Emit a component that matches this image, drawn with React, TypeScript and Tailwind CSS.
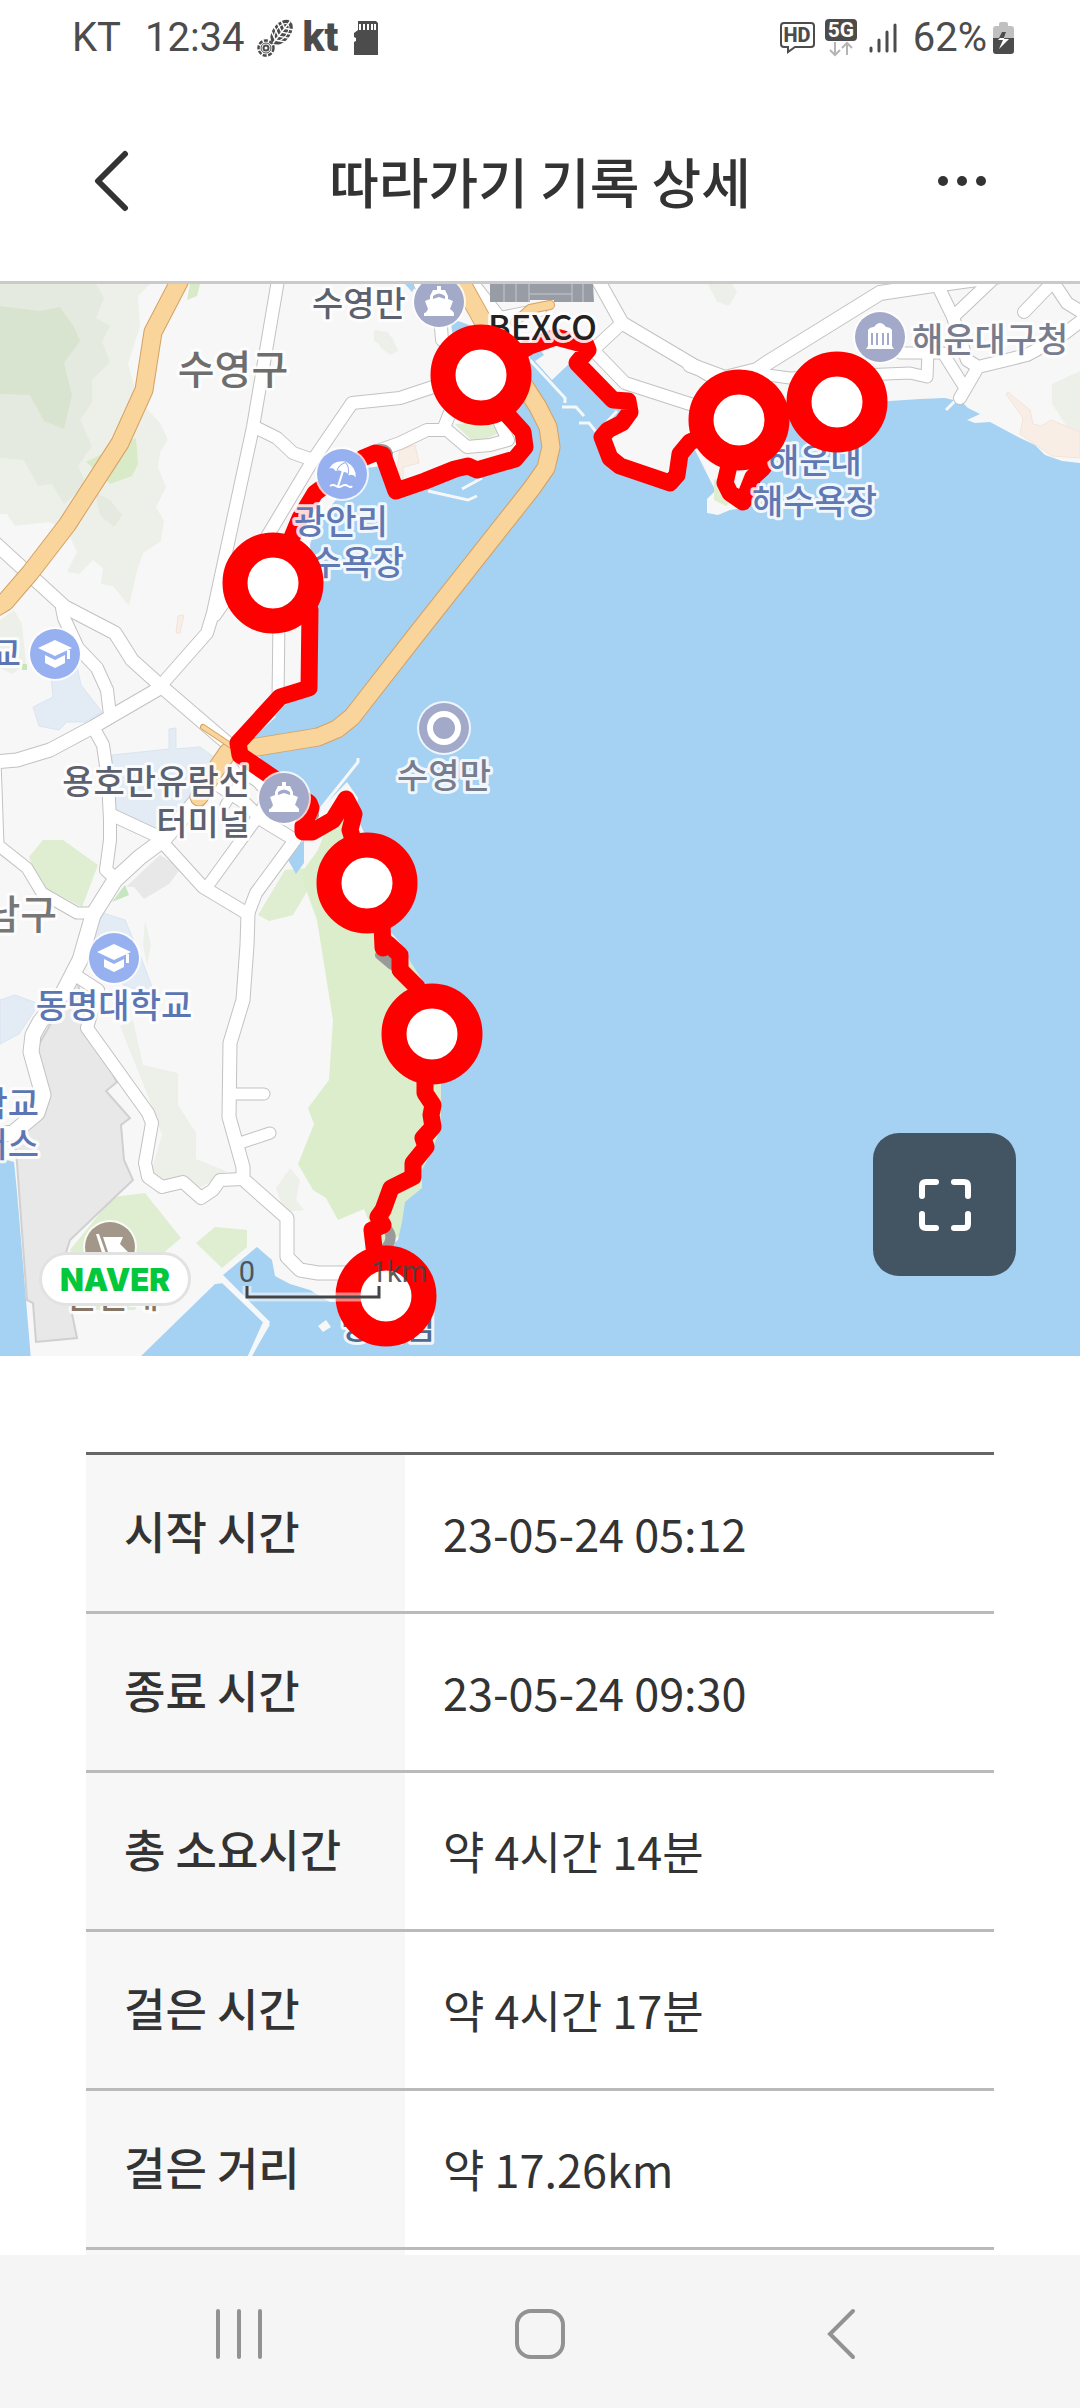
import type { ReactNode } from 'react';

interface Road {
  points: string;
  width: number;
}

interface PlaceLabel {
  text: string;
  x: number;
  y: number;
  color: string;
  size?: number;
  anchor?: 'start' | 'middle' | 'end';
}

const records = [
  { label: '시작 시간', value: '23-05-24 05:12' },
  { label: '종료 시간', value: '23-05-24 09:30' },
  { label: '총 소요시간', value: '약 4시간 14분' },
  { label: '걸은 시간', value: '약 4시간 17분' },
  { label: '걸은 거리', value: '약 17.26km' },
];

const roads: Road[] = [
  { points: '278,280 253,427 213,613 207,633 163,683', width: 12 },
  { points: '-5,543 30,575 65,607 115,633 132,660 162,687 233,748 262,785', width: 13 },
  { points: '160,688 110,717 93,727 50,750 17,760 -5,762', width: 13 },
  { points: '62,608 64,618 78,648 97,668 107,690 110,715', width: 12 },
  { points: '93,727 103,745 108,780 110,820 110,840 106,870 115,878', width: 12 },
  { points: '112,815 155,835 163,843 203,887 248,914', width: 12 },
  { points: '215,770 200,797 163,840 140,857 115,880 93,915 80,960 63,993 40,1022 33,1035 31,1052 43,1095 37,1113 13,1133 -5,1135', width: 15 },
  { points: '-5,760 -2,845 27,868 42,893 77,913 92,913', width: 11 },
  { points: '248,914 247,945 243,1000 230,1043 229,1117 243,1167 243,1179 287,1218 287,1257 300,1270 318,1273 360,1273', width: 13 },
  { points: '229,1094 264,1094', width: 11 },
  { points: '243,1142 270,1133', width: 11 },
  { points: '243,1179 220,1180 213,1190 201,1198 183,1182 162,1187 148,1177 145,1163 152,1123 148,1113 87,1028 98,990 75,975', width: 12 },
  { points: '248,914 256,893 295,840 262,820 245,803 215,783', width: 12 },
  { points: '207,887 257,818', width: 11 },
  { points: '225,805 245,775 270,790 258,815', width: 9 },
  { points: '279,620 278,700', width: 11 },
  { points: '255,427 277,438 293,453 313,460', width: 12 },
  { points: '215,615 250,565 313,460 352,403 400,398 433,387 480,370', width: 12 },
  { points: '380,450 400,443 427,430 447,430 467,447 490,445 508,440 500,423', width: 12 },
  { points: '443,430 455,400', width: 12 },
  { points: '420,284 440,315 442,340', width: 12 },
  { points: '470,280 500,318 540,310', width: 12 },
  { points: '598,280 622,323 713,377 740,385', width: 13 },
  { points: '622,323 593,350 625,383 690,404 740,420', width: 12 },
  { points: '690,365 725,378 757,370 767,363 880,293 933,285 1000,276', width: 14 },
  { points: '753,373 790,378 910,373 927,377 928,352', width: 11 },
  { points: '937,284 953,317 992,280', width: 12 },
  { points: '953,317 967,360 975,365', width: 12 },
  { points: '900,353 943,353 963,385', width: 11 },
  { points: '960,398 978,367 1027,355 1060,337 1085,318', width: 12 },
  { points: '1024,312 1053,282 1067,303 1085,314', width: 12 },
];

const highways: Road[] = [
  { points: '180,280 153,332 144,390 120,443 67,525 30,573 5,602 -5,608', width: 17 },
  { points: '460,280 485,325 538,407 548,427 551,447 546,468 532,488 412,640 352,717 337,729 318,737 257,747 228,752 212,775 199,797', width: 17 },
  { points: '203,727 230,745', width: 4 },
  { points: '515,322 530,309 550,305', width: 8 },
];

const trackPoints =
  '837,402 739,420 728,470 725,483 730,493 743,502 753,477 763,468 739,420 690,442 680,454 677,475 670,483 620,466 610,458 602,437 608,430 622,423 630,412 628,401 613,400 577,363 588,350 586,345 556,337 530,346 481,375 503,410 523,432 525,447 515,459 477,470 468,466 455,469 425,481 396,491 383,455 375,453 363,458 315,493 300,518 273,583 310,610 309,688 280,697 238,743 240,755 275,779 309,803 311,808 303,826 303,832 312,832 333,820 346,799 354,814 350,830 367,883 382,925 383,948 388,944 400,955 400,970 417,987 432,1034 425,1083 425,1093 433,1105 431,1115 433,1127 423,1138 426,1147 413,1163 413,1177 391,1188 383,1210 378,1217 383,1225 372,1230 374,1247 386,1296';

const stops = [
  { x: 481, y: 375 },
  { x: 739, y: 420 },
  { x: 837, y: 402 },
  { x: 273, y: 583 },
  { x: 367, y: 883 },
  { x: 432, y: 1034 },
  { x: 386, y: 1296 },
];

const placeLabels: PlaceLabel[] = [
  { text: '수영만', x: 312, y: 316, color: '#5c6170' },
  { text: '수영구', x: 233, y: 384, color: '#6e6e6e', size: 40, anchor: 'middle' },
  { text: 'BEXCO', x: 488, y: 340, color: '#222222' },
  { text: '해운대구청', x: 912, y: 352, color: '#777c8e' },
  { text: '해운대', x: 768, y: 473, color: '#6078b4' },
  { text: '해수욕장', x: 752, y: 514, color: '#6078b4' },
  { text: '광안리', x: 341, y: 534, color: '#6078b4', anchor: 'middle' },
  { text: '해수욕장', x: 404, y: 575, color: '#6078b4', anchor: 'end' },
  { text: '교', x: 21, y: 666, color: '#5c76b4', anchor: 'end' },
  { text: '용호만유람선', x: 250, y: 794, color: '#5c6170', anchor: 'end' },
  { text: '터미널', x: 250, y: 835, color: '#5c6170', anchor: 'end' },
  { text: '수영만', x: 444, y: 788, color: '#777c8e', anchor: 'middle' },
  { text: '남구', x: 57, y: 929, color: '#777777', size: 40, anchor: 'end' },
  { text: '동명대학교', x: 114, y: 1018, color: '#5c76b4', anchor: 'middle' },
  { text: '대학교', x: 39, y: 1116, color: '#5c76b4', anchor: 'end' },
  { text: '캠퍼스', x: 39, y: 1157, color: '#5c76b4', anchor: 'end' },
  { text: '신선대', x: 112, y: 1308, color: '#867565', anchor: 'middle' },
  { text: '방패섬', x: 388, y: 1339, color: '#4f6a8c', anchor: 'middle' },
];

function Poi({ x, y, color, children }: { x: number; y: number; color: string; children: ReactNode }) {
  return (
    <g transform={`translate(${x} ${y})`}>
      <circle r="27" fill="#fff" opacity="0.8" />
      <circle r="25" fill={color} />
      {children}
    </g>
  );
}

function ShipGlyph() {
  return (
    <g fill="#fff">
      <path d="M-2-16h4v4h4l3 6v3l5 2-3 8c2 1 3 3 4 4v3H-15v-3c2 0 3-2 4-4l-3-8 5-2v-3l3-6h4z" />
      <path d="M-6-3v-3q6-5 12 0v3L0-5z" fill="#a2a9c9" />
    </g>
  );
}

function SchoolGlyph() {
  return (
    <g fill="#fff">
      <path d="M0-14 17-6 0 2-17-6z" />
      <path d="M-10 1 0 6 10 1v8L0 14l-10-5z" />
      <path d="M12-4h3V5h-3z" />
    </g>
  );
}

function TrailMap() {
  return (
    <svg viewBox="0 284 1080 1072" className="block w-full" role="img" aria-label="걷기 경로 지도">
      <rect y="284" width="1080" height="1072" fill="#f7f7f7" />

      {/* hills and parks */}
      <path fill="#edf0e9" d="M0 284h150l-12 12 2 30-12 38 10 35 22 24 8 17-8 12-2 15 8 20-10 20 8 14-3 20-18 12-6 18-8 35-16-20-12-2 2-16-10-8-14 14-12-2 10-20-10-22-18-8-34 4-8-12-16 0z M0 620l14-10 8 14 4 40-14 10-12-6z" />
      <path fill="#e4eadf" d="M0 284h96l8 14-8 20 14 8-8 16 8 20-18 18 0 22-12 18 12 26-14 20 8 18-22 20-12-20-14 2-14-26-24-2z M95 492l15 8 12 15-8 12-14-12z" />
      <path fill="#d9e4d0" d="M0 306l40 5 20-4 14 20 6 14-16 22 8 32-8 34-20-8-14-26-30-1z" />
      <path fill="#d8eac8" d="M86 462l24-12 26-12 2 26-6 12-22 8-6-6z M190 284h10l-3 12-10 4z" />
      <path fill="#edf0e9" d="M374 330l14 2 10 18-8 4-16-14z M380 332l12 5 6 14-8 4-10-8z M708 284h24l5 8-8 14-12-4z M133 1020l10 45 35 8 0 32 18 28 0 26 30 12-24 16-42-6-10-6 12-40-12-34-30-75z M290 1168l10 12-4 20 8 10-20 2-8-24z M1052 384l28-13v61l-12-4-16-24z M145 920l6 25-4 20-4-20z" />
      <path fill="#dfedd1" d="M43 840h20l35 25-16 42-42-22-11-28z M258 915l27-45 22-2 2 20-16 27-24 6z M113 1197l32-4 36 45-26 22-20 50H92l-22-60z M196 1243l19-16 32 3v17l-25 21z M455 424l38-2 12 8-30 14z" />
      <path fill="#dcedcc" d="M330 818l22-3 20 50 12 60 24 30 26 50 8 60v60l-20 55v15l-18 20-4 20-20 14-16-40-26 11-12-22-13-8-15-26 16-40-6-16 21-28 4-60-16-100-13-36-2-12 16-22z" />
      <path fill="#c6e6c0" d="M125 885l4 10-17 7z M22 664h5v6h-5z" />

      {/* campuses, ports and built-up blocks */}
      <g fill="#e3ebf4" stroke="#dbe5f0">
        <path d="M112 755l57-6v-20l7-1v21l24-2 18 13-33 60-30 10-40-17z" />
        <path d="M33 707l20-10-2-20 10-20 14 0 6 28 21 27-17 10-18 0-8 8-20-4z" />
        <path d="M103 913l22 7 15 35 12 32-6 6-22-8-25-20-9-20z" />
        <path d="M0 1000l15-5 24 9-20 30-19 10z" />
      </g>
      <path fill="#e8e8e8" stroke="#d0d0d0" strokeWidth="2" d="M77 978l10 50 30 54-11 9 24 27-9 7 3 35 9 20-18 17-45 43-8 25 15 73-41 4-3-39-6-3-10-137-3-30 28-30-12-43z" />
      <path fill="#e8e8e8" d="M160 855l21 13-12 16-25 15-10-12-8 0z" />
      <path fill="#f9eee6" stroke="#f3e4da" d="M1008 392l22 18 3 14 8 2 10-6 29 12v26l-28-2-32-22 3-16-17-24z M400 450l15-5 4 18-16 4 0 14h-8z M178 616l6-1-4 18h-4z" />

      {/* sea */}
      <g fill="#a5d1f2">
        <path d="M1080 463 1062 461 1045 455 1035 445 1020 438 1005 430 990 422 975 423 967 420 980 414 968 408 962 402 945 398 920 399 890 401 800 415 770 425 760 470 742 510 720 500 690 440 680 454 677 475 670 483 620 466 608 458 600 440 608 430 622 423 628 401 613 400 577 363 570 363 552 380 535 361 544 355 538 347 530 350 530 380 505 408 523 432 525 447 515 459 477 470 430 485 396 491 383 465 375 467 365 468 345 490 318 520 305 560 318 600 316 690 285 705 267 725 250 742 260 758 285 785 312 815 325 805 347 782 358 798 356 815 372 850 385 925 400 943 408 958 425 985 438 1040 441 1080 441 1110 440 1130 430 1155 422 1170 422 1188 405 1202 402 1222 398 1240 385 1250 388 1300 330 1302 310 1290 290 1284 275 1276 272 1260 257 1247 223 1275 270 1322 250 1360 1080 1360Z" />
        <path d="M215 1284l10-1 38 39-17 38H137z" />
        <path d="M0 1158l14 4 3 30 14 168H0z" />
        <path d="M450 318l22 8-10 10-8 6z M405 284h12l-5 8z M287 858l17-18v23l-8 11z" />
      </g>
      <path fill="#f7f7f7" d="M710 466l20 0 30 30-16 12-14 2-12 5-11-2 0-14 8-8z M318 1326l8-6 5 7-8 5z" />
      <path fill="#dfedd1" d="M714 480l18-8 6 24-12 10-12-6z" />
      <g stroke="#f5f8fa" strokeWidth="3" fill="none">
        <path d="M530 360l35 38v5M562 407h14l8 9M579 423h10l8 10 20-22" />
        <path d="M428 491l40 9 9-4M462 489l20-11M315 816l43-54v-4M265 725l10-9M946 410l12-12M222 1281l46 44-18 31" />
      </g>

      {roads.map((r) => (
        <polyline key={r.points} points={r.points} fill="none" stroke="#c2c2c2" strokeWidth={r.width + 2} strokeLinecap="round" strokeLinejoin="round" />
      ))}
      {roads.map((r) => (
        <polyline key={r.points} points={r.points} fill="none" stroke="#fff" strokeWidth={r.width} strokeLinecap="round" strokeLinejoin="round" />
      ))}
      {highways.map((r) => (
        <g key={r.points} fill="none" strokeLinecap="round" strokeLinejoin="round">
          <polyline points={r.points} stroke="#d5a163" strokeWidth={r.width + 2} />
          <polyline points={r.points} stroke="#f9d59b" strokeWidth={r.width} />
        </g>
      ))}

      <path fill="#989ca4" d="M490 284h103l1 18h-40v-2h-24v2h-40z" />
      <path stroke="#c6c9ce" d="M504 284v18M516 284v18M529 284v18M572 284v18M583 284v18M529 294h43" />

      {/* planned course under the walked track */}
      <path d="M376 450q10-3 12 4M388 1230q6 8-2 18M380 955l12 10M313 803l1 12" fill="none" stroke="#9a9a9a" strokeWidth="10" strokeLinecap="round" />
      <polyline points={trackPoints} fill="none" stroke="#ff0000" strokeWidth="17" strokeLinecap="round" strokeLinejoin="round" />

      <Poi x={439} y={302} color="#a2a9c9"><ShipGlyph /></Poi>
      <Poi x={284} y={798} color="#a2a9c9"><ShipGlyph /></Poi>
      <Poi x={55} y={654} color="#97b1f0"><SchoolGlyph /></Poi>
      <Poi x={114} y={958} color="#97b1f0"><SchoolGlyph /></Poi>
      <Poi x={880} y={337} color="#a2a9c9">
        <path fill="#fff" d="M-12-7q2-3 6-3 6-8 12 0 4 0 6 3v16l2 3H-14l2-3z" />
        <path stroke="#a2a9c9" strokeWidth="2" d="M-8-4V8M-3-4V8M3-4V8M8-4V8" />
      </Poi>
      <Poi x={342} y={474} color="#97b1f0">
        <g transform="rotate(18)">
          <path fill="#fff" d="M-14-1q2-10 14-12 12 2 14 12-3-3-7 0-3-3-7-1-4-2-7 1-4-3-7 0z" />
          <path fill="none" stroke="#97b1f0" d="M-6-2q1-7 6-10 5 3 6 10" />
          <path stroke="#fff" strokeWidth="2" d="M0-3V13" />
        </g>
        <path fill="none" stroke="#fff" strokeWidth="2" d="M-12 12q3-2 6 0t6 0 6 0 4 0" />
      </Poi>
      <Poi x={444} y={728} color="#a2a9c9">
        <circle r="14" fill="none" stroke="#fff" strokeWidth="6" />
      </Poi>
      <Poi x={110} y={1247} color="#a29789">
        <path fill="#fff" d="M-14-13h3l10 28h-4z M-7-10h20l-3 7 8 8H-2z" />
      </Poi>

      {placeLabels.map((p) => (
        <text
          key={`${p.text}-${p.y}`}
          x={p.x}
          y={p.y}
          fill={p.color}
          fontSize={p.size ?? 34}
          textAnchor={p.anchor ?? 'start'}
          className="font-medium [paint-order:stroke]"
          stroke="#ffffff"
          strokeOpacity="0.85"
          strokeWidth="6"
          strokeLinejoin="round"
        >
          {p.text}
        </text>
      ))}

      {stops.map((s) => (
        <circle key={`${s.x}-${s.y}`} cx={s.x} cy={s.y} r="38" fill="#fff" stroke="#ff0000" strokeWidth="25" />
      ))}

      <path d="M247 1286v11h132v-11" fill="none" stroke="#fff" strokeOpacity="0.5" strokeWidth="9" />
      <path d="M247 1286v11h132v-11" fill="none" stroke="#444" strokeWidth="3" />
      <g fill="#444" fillOpacity="0.9" fontSize="29" fontFamily="Roboto, sans-serif" textAnchor="middle">
        <text x="247" y="1282">0</text>
        <text x="399" y="1282">1km</text>
      </g>
    </svg>
  );
}

function StatusBar() {
  return (
    <div className="flex h-20 items-center justify-between pr-[66px] pb-1 pl-[72px] font-[Roboto,sans-serif] text-[40px] leading-none text-[#4c4c4c]">
      <div className="flex items-center">
        <span>KT</span>
        <span className="ml-6">12:34</span>
        <svg width="38" height="38" viewBox="0 0 38 38" className="ml-3">
          <g transform="rotate(38 24 14)">
            <ellipse cx="24" cy="13" rx="9" ry="14" fill="#4c4c4c" />
            <path d="M14 3l10 5 10-5M14 8l10 5 10-5M14 13l10 5 10-5M14 18l10 5 10-5M24-1v28" fill="none" stroke="#fff" strokeWidth="1.5" />
            <ellipse cx="24" cy="13" rx="5.5" ry="10" fill="none" stroke="#fff" />
          </g>
          <circle cx="9" cy="29" r="7.5" fill="none" stroke="#4c4c4c" strokeWidth="2.5" strokeDasharray="4 1.5" />
          <circle cx="9" cy="29" r="5" fill="none" stroke="#4c4c4c" />
          <circle cx="9" cy="29" r="2.5" fill="none" stroke="#4c4c4c" strokeWidth="2" />
        </svg>
        <span className="ml-2 font-black">kt</span>
        <svg width="24" height="34" viewBox="0 0 24 34" className="ml-4">
          <path d="M4 0h18l2 2v32H0V21l2-1v-3l-2-1v-4l4-3z" fill="#4c4c4c" />
          <path d="M6 3v6M10 3v6M14 3v6M18 3v6M21 3v6" stroke="#fff" strokeWidth="2" />
        </svg>
      </div>
      <div className="flex items-center">
        <svg width="35" height="32" viewBox="0 0 35 32">
          <path d="M4 1h27q3 0 3 3v18q0 3-3 3H15l-7 5v-5H4q-3 0-3-3V4q0-3 3-3z" fill="none" stroke="#4c4c4c" strokeWidth="2" />
          <text x="17" y="20" fontSize="20" fontWeight="800" textAnchor="middle" fill="#4c4c4c">HD</text>
        </svg>
        <svg width="32" height="38" viewBox="0 0 32 38" className="ml-2.5">
          <rect width="32" height="22" rx="4" fill="#4c4c4c" />
          <text x="16" y="18" fontSize="21" fontWeight="700" textAnchor="middle" fill="#fff">5G</text>
          <path d="M10 23v13M5 31l5 5 5-5M22 36V24M17 29l5-5 5 5" fill="none" stroke="#b5b5b5" strokeWidth="2" />
        </svg>
        <svg width="28" height="30" viewBox="0 0 28 30" className="ml-3">
          <path d="M2 25v3M10 17v11M18 9v19M26 2v26" stroke="#4c4c4c" strokeWidth="3" strokeLinecap="round" />
        </svg>
        <span className="ml-4">62%</span>
        <svg width="21" height="32" viewBox="0 0 21 32" className="ml-1.5">
          <path d="M6 2q0-2 2-2h5q2 0 2 2v2h3q3 0 3 3v9H0V7q0-3 3-3h3z" fill="#c0c0c0" />
          <path d="M0 16h21v13q0 3-3 3H3q-3 0-3-3z" fill="#4c4c4c" />
          <path d="M13 10 5 18h5l-4 9 10-10h-5z" fill="#fff" />
          <path d="M9 10h4l-2 6H6z" fill="#4c4c4c" />
        </svg>
      </div>
    </div>
  );
}

function PageHeader() {
  return (
    <header className="flex h-[204px] items-center justify-between border-b-[3px] border-[#cacaca] px-[94px]">
      <button aria-label="뒤로" className="flex w-12">
        <svg width="36" height="62" viewBox="0 0 36 62">
          <path d="M31 4 4 31l27 27" fill="none" stroke="#333" strokeWidth="6" strokeLinecap="round" strokeLinejoin="round" />
        </svg>
      </button>
      <h1 className="text-[54px] leading-none font-medium">따라가기 기록 상세</h1>
      <button aria-label="더보기" className="flex w-12">
        <svg width="48" height="10" viewBox="0 0 48 10" fill="#333">
          <circle cx="5" cy="5" r="5" />
          <circle cx="24" cy="5" r="5" />
          <circle cx="43" cy="5" r="5" />
        </svg>
      </button>
    </header>
  );
}

function RecordTable() {
  return (
    <table className="w-full border-collapse text-[45px] leading-[66px]">
      <tbody>
        {records.map((r) => (
          <tr key={r.label} className="h-[159px] border-b-[3px] border-[#bababa] first:border-t-[3px] first:border-t-[#666]">
            <th scope="row" className="w-[319px] bg-[#f7f7f7] pb-1 pl-[38px] text-left font-medium">{r.label}</th>
            <td className="pl-[38px]">{r.value}</td>
          </tr>
        ))}
        <tr className="h-[6px]">
          <th className="bg-[#f7f7f7]" />
          <td />
        </tr>
      </tbody>
    </table>
  );
}

function NavigationBar() {
  return (
    <nav className="mt-auto flex h-[153px] items-center bg-[#f5f5f5] px-[88px] pt-1">
      <button aria-label="최근 앱" className="flex flex-1 justify-center">
        <svg width="48" height="50" viewBox="0 0 48 50">
          <path d="M3 2v46M24 2v46M45 2v46" stroke="#929292" strokeWidth="4" strokeLinecap="round" />
        </svg>
      </button>
      <button aria-label="홈" className="flex flex-1 justify-center">
        <svg width="50" height="50" viewBox="0 0 50 50">
          <rect x="2" y="2" width="46" height="46" rx="14" fill="none" stroke="#929292" strokeWidth="4" />
        </svg>
      </button>
      <button aria-label="뒤로 가기" className="flex flex-1 justify-center">
        <svg width="30" height="52" viewBox="0 0 30 52">
          <path d="M27 3 4 26l23 23" fill="none" stroke="#929292" strokeWidth="4" strokeLinecap="round" />
        </svg>
      </button>
    </nav>
  );
}

export default function App() {
  return (
    <div className="flex min-h-screen flex-col bg-white font-['Noto_Sans_CJK_KR',sans-serif] text-[#333]">
      <StatusBar />
      <PageHeader />
      <main>
        <section className="relative overflow-hidden">
          <TrailMap />
          <a
            href="#naver"
            className="absolute bottom-[50px] left-[39px] flex h-[54px] w-[152px] items-center justify-center rounded-full border-[3px] border-[#e2e2e2] bg-white font-[Inter,sans-serif] text-[31px] leading-none font-black text-[#03c73c]"
          >
            NAVER
          </a>
          <button
            aria-label="전체 화면"
            className="absolute right-16 bottom-20 flex h-[143px] w-[143px] items-center justify-center rounded-[26px] bg-[#435563]"
          >
            <svg width="52" height="52" viewBox="0 0 52 52">
              <path
                d="M3 17V7q0-4 4-4h10M35 3h10q4 0 4 4v10M49 35v10q0 4-4 4H35M17 49H7q-4 0-4-4V35"
                fill="none"
                stroke="#fff"
                strokeWidth="6"
                strokeLinecap="round"
              />
            </svg>
          </button>
        </section>
        <section className="px-[86px] pt-24">
          <RecordTable />
        </section>
      </main>
      <NavigationBar />
    </div>
  );
}
